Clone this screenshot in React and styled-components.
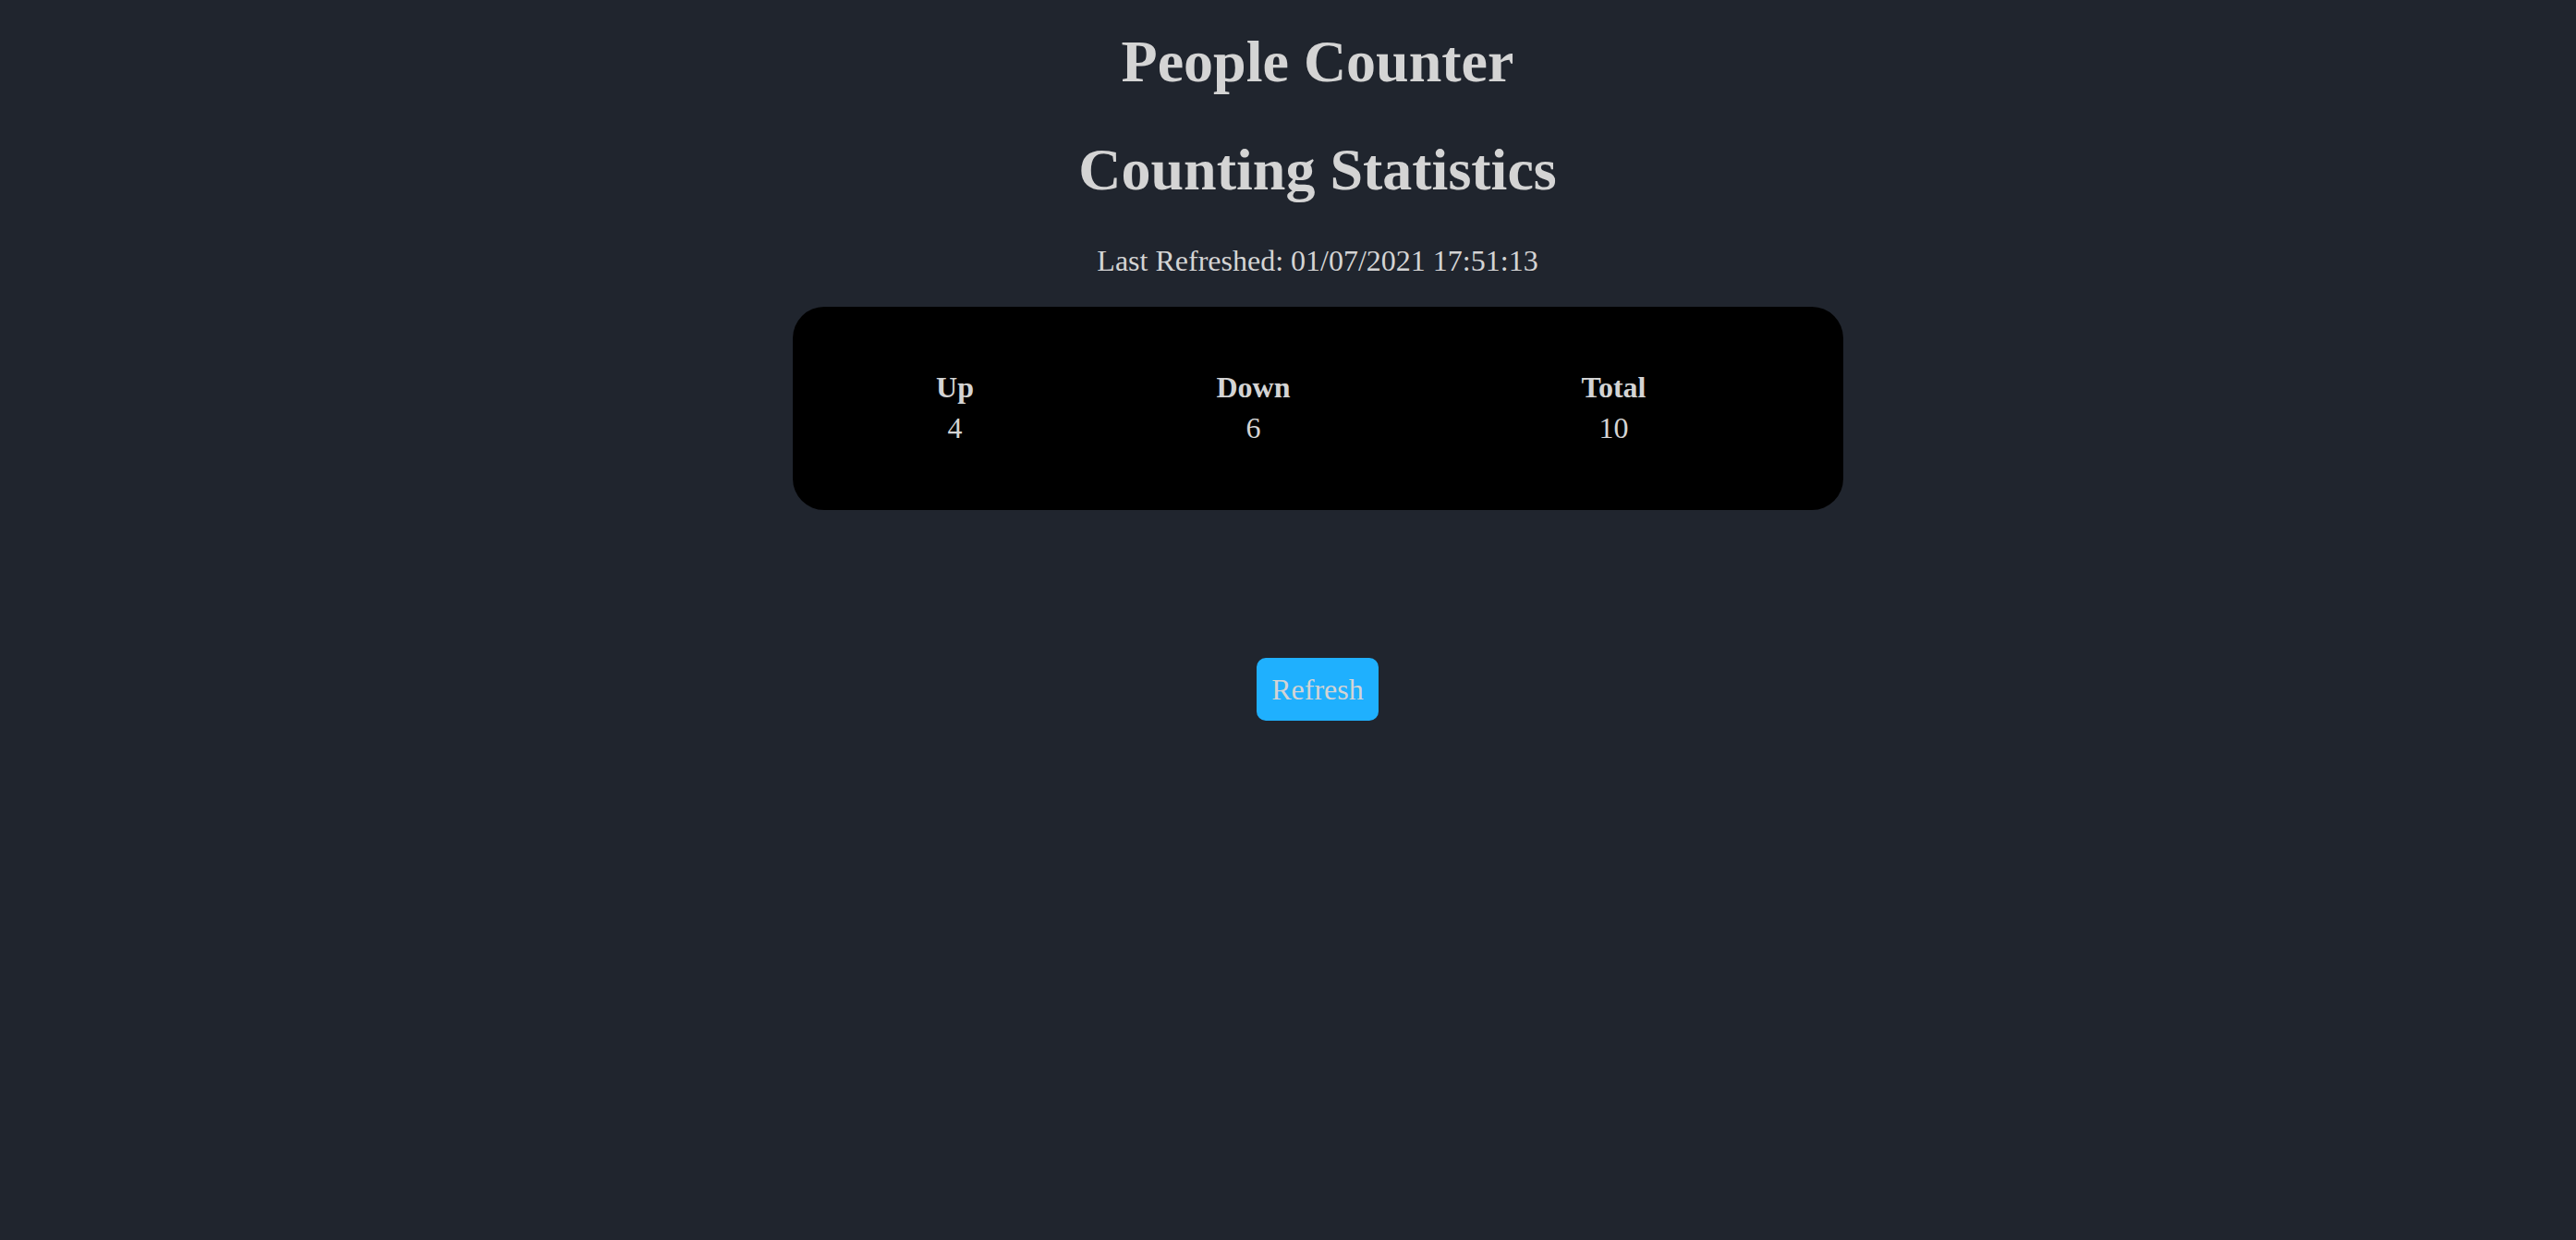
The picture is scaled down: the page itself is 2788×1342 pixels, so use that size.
import styled, { createGlobalStyle } from 'styled-components';

const GlobalStyle = createGlobalStyle`
	html, body {
		margin: 0;
		padding: 0;
		background: #20252e;
	}

	body {
		min-height: 100vh;
		font-family: 'Liberation Serif', 'Times New Roman', serif;
		color: #d4d4d4;
	}
`;

const Page = styled.main`
	display: flex;
	flex-direction: column;
	align-items: center;
	padding: 30px 0 0 64px;
	min-height: 100vh;
	box-sizing: border-box;
`;

const Title = styled.h1`
	margin: 0 0 43px;
	font-size: 64px;
	line-height: 74px;
	font-weight: bold;
	text-align: center;
`;

const Refreshed = styled.p`
	margin: 0 0 31px;
	font-size: 32px;
	line-height: 37px;
`;

const StatsCard = styled.section`
	box-sizing: border-box;
	width: 1137px;
	height: 220px;
	padding: 69px 0 70px 64px;
	background: #000;
	border-radius: 34px;
`;

const StatsGrid = styled.div`
	display: grid;
	grid-template-columns: 224px 422px 358px;
	row-gap: 7px;
	font-size: 32px;
	line-height: 37px;
	text-align: center;
`;

const Label = styled.div`
	font-weight: bold;
`;

const Value = styled.div`
	font-weight: normal;
`;

const RefreshButton = styled.button`
	margin-top: 160px;
	padding: 15.5px 16px;
	border: none;
	border-radius: 10px;
	background: #1fb0fe;
	color: #d4d4d4;
	font-family: inherit;
	font-size: 32px;
	line-height: 37px;
	cursor: pointer;
`;

const stats = [
	{ label: 'Up', value: 4 },
	{ label: 'Down', value: 6 },
	{ label: 'Total', value: 10 },
];

export default function App() {
	return (
		<>
			<GlobalStyle />
			<Page>
				<Title>People Counter</Title>
				<Title>Counting Statistics</Title>
				<Refreshed>Last Refreshed: 01/07/2021 17:51:13</Refreshed>
				<StatsCard>
					<StatsGrid>
						{stats.map((s) => (
							<Label key={s.label}>{s.label}</Label>
						))}
						{stats.map((s) => (
							<Value key={s.label}>{s.value}</Value>
						))}
					</StatsGrid>
				</StatsCard>
				<RefreshButton>Refresh</RefreshButton>
			</Page>
		</>
	);
}
